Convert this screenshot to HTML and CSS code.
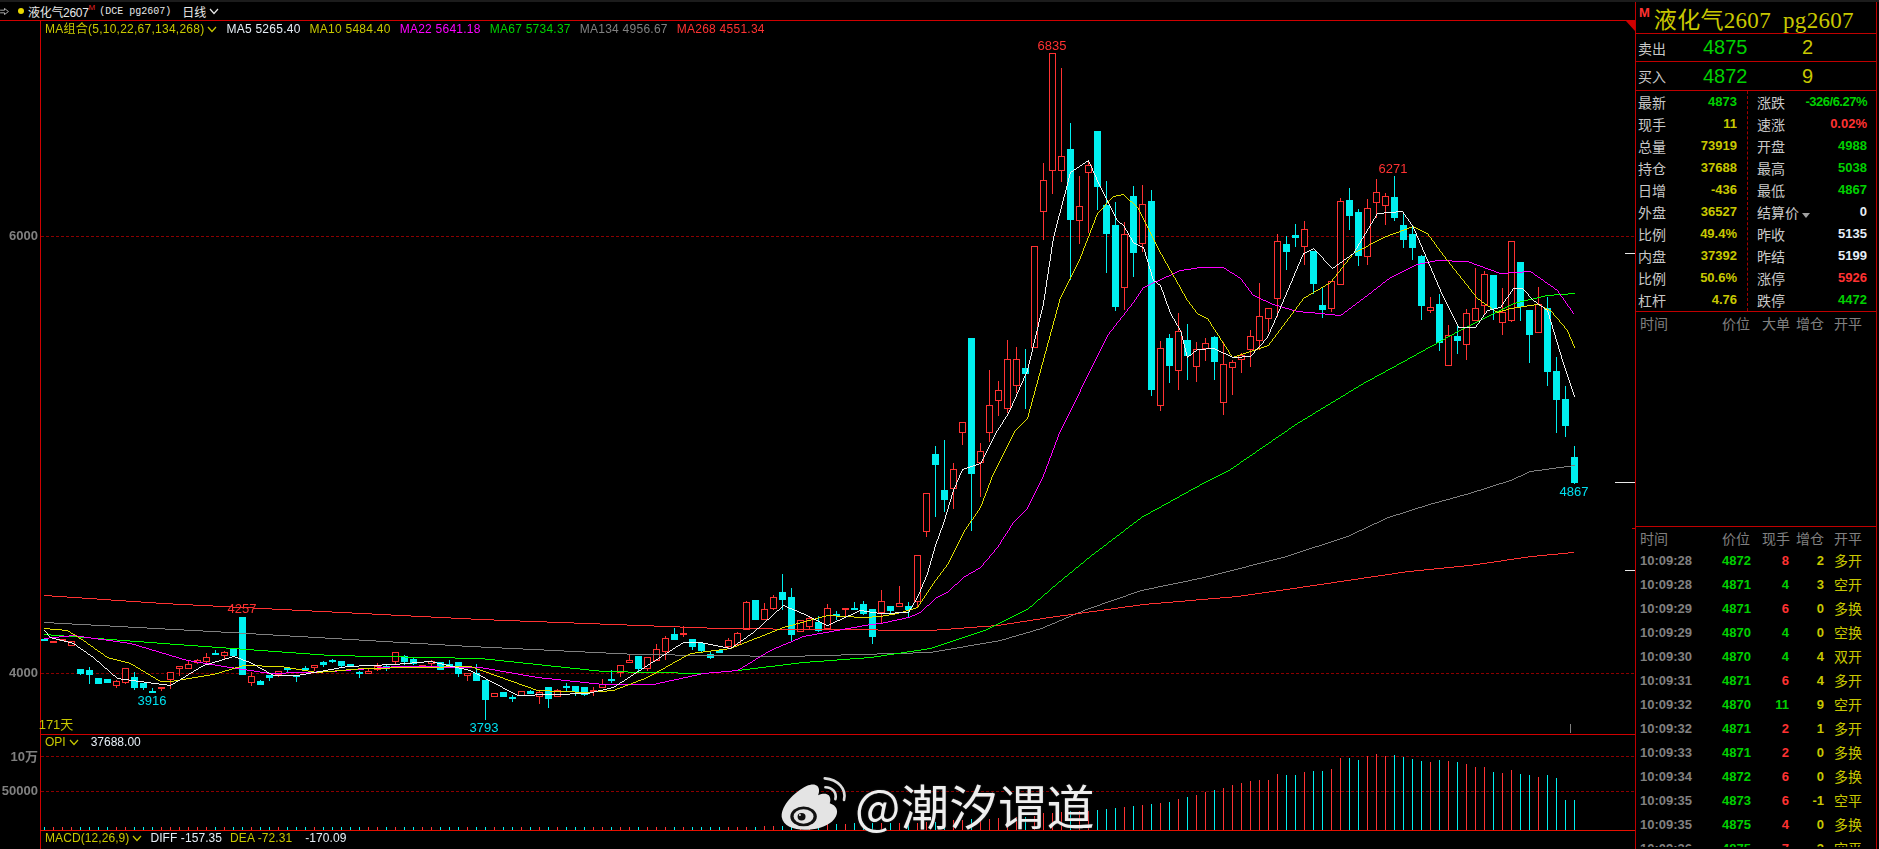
FILE: index.html
```html
<!DOCTYPE html>
<html lang="zh-CN">

<head>
    <meta charset="UTF-8">
    <title>液化气2607 日线</title>
    <link rel="stylesheet" href="styles.css">
</head>

<body>

    <div id="app">
        <!-- left: kline chart -->
        <div id="chart-area">
            <div id="title-bar">
                <svg class="back-icon" viewBox="0 0 10 8"><path d="M0 2.5H5V0.5L9.5 4L5 7.5V5.5H0"/></svg>
                <span class="title-dot"></span>
                <span class="title-name">液化气2607</span>
                <span class="title-m">M</span>
                <span class="title-code">(DCE pg2607)</span>
                <span class="title-period">日线</span>
                <svg class="chev chev-white" viewBox="0 0 10 7"><polyline points="1,1 5,5.5 9,1"/></svg>
            </div>

            <div id="plot">
                <canvas id="kline" width="1635" height="828"></canvas>

                <div class="legend legend-ma">
                    <span class="c-yellow">MA组合(5,10,22,67,134,268)<svg class="chev" viewBox="0 0 10 7"><polyline points="1,1 5,5.5 9,1"/></svg></span>
                    <span class="c-white">MA5 5265.40</span>
                    <span class="c-yellow">MA10 5484.40</span>
                    <span class="c-pink">MA22 5641.18</span>
                    <span class="c-green">MA67 5734.37</span>
                    <span class="c-gray">MA134 4956.67</span>
                    <span class="c-red">MA268 4551.34</span>
                </div>

                <div class="legend legend-opi">
                    <span class="c-yellow">OPI<svg class="chev" viewBox="0 0 10 7"><polyline points="1,1 5,5.5 9,1"/></svg></span>
                    <span class="c-white">37688.00</span>
                </div>

                <div class="legend legend-macd">
                    <span class="c-yellow">MACD(12,26,9)<svg class="chev" viewBox="0 0 10 7"><polyline points="1,1 5,5.5 9,1"/></svg></span>
                    <span class="c-white">DIFF -157.35</span>
                    <span class="c-yellow">DEA -72.31</span>
                    <span class="c-white macd-last">-170.09</span>
                </div>

                <!-- watermark -->
                <div id="watermark">
                    <svg class="weibo" viewBox="15 25 205 172">
                        <path class="weibo-body" d="M20 152C18 118 55 78 95 58C122 46 140 58 130 86C158 74 172 88 165 110C190 118 196 142 172 165C135 198 28 204 20 152Z"/>
                        <ellipse class="weibo-dark" cx="86" cy="150" rx="40" ry="30"/>
                        <ellipse class="weibo-body" cx="86" cy="150" rx="30" ry="22"/>
                        <ellipse class="weibo-dark" cx="80" cy="151" rx="12" ry="11"/>
                        <circle class="weibo-body" cx="75" cy="146" r="3"/>
                        <path class="weibo-wave" d="M150 35C190 38 216 68 208 100"/>
                        <path class="weibo-wave" d="M152 62C172 62 187 78 182 98"/>
                    </svg>
                    <span class="watermark-text">@潮汐谓道</span>
                </div>
            </div>
        </div>

        <!-- right: quote panel -->
        <div id="side">
            <div class="quote-head">
                <span class="quote-m">M</span>
                <span class="quote-name">液化气2607&nbsp;&nbsp;pg2607</span>
            </div>

            <div class="book-row book-ask">
                <span class="book-label">卖出</span>
                <span class="book-price">4875</span>
                <span class="book-size">2</span>
            </div>
            <div class="book-row book-bid">
                <span class="book-label">买入</span>
                <span class="book-price">4872</span>
                <span class="book-size">9</span>
            </div>

            <div class="stats">
                <div class="stats-col stats-left">
                    <div class="stat"><span>最新</span><b class="c-green">4873</b></div>
                    <div class="stat"><span>现手</span><b class="c-yellow">11</b></div>
                    <div class="stat"><span>总量</span><b class="c-yellow">73919</b></div>
                    <div class="stat"><span>持仓</span><b class="c-yellow">37688</b></div>
                    <div class="stat"><span>日增</span><b class="c-yellow">-436</b></div>
                    <div class="stat"><span>外盘</span><b class="c-yellow">36527</b></div>
                    <div class="stat"><span>比例</span><b class="c-yellow">49.4%</b></div>
                    <div class="stat"><span>内盘</span><b class="c-yellow">37392</b></div>
                    <div class="stat"><span>比例</span><b class="c-yellow">50.6%</b></div>
                    <div class="stat"><span>杠杆</span><b class="c-yellow">4.76</b></div>
                </div>
                <div class="stats-col stats-right">
                    <div class="stat"><span>涨跌</span><b class="c-green stat-narrow">-326/6.27%</b></div>
                    <div class="stat"><span>速涨</span><b class="c-red">0.02%</b></div>
                    <div class="stat"><span>开盘</span><b class="c-green">4988</b></div>
                    <div class="stat"><span>最高</span><b class="c-green">5038</b></div>
                    <div class="stat"><span>最低</span><b class="c-green">4867</b></div>
                    <div class="stat"><span>结算价<i class="caret"></i></span><b class="c-white">0</b></div>
                    <div class="stat"><span>昨收</span><b class="c-white">5135</b></div>
                    <div class="stat"><span>昨结</span><b class="c-white">5199</b></div>
                    <div class="stat"><span>涨停</span><b class="c-red">5926</b></div>
                    <div class="stat"><span>跌停</span><b class="c-green">4472</b></div>
                </div>
            </div>

            <div class="big-orders">
                <div class="tick-head">
                    <span>时间</span><span>价位</span><span class="num">大单</span><span class="num">增仓</span><span class="kp">开平</span>
                </div>
            </div>

            <div class="ticks">
                <div class="tick-head">
                    <span>时间</span><span>价位</span><span class="num">现手</span><span class="num">增仓</span><span class="kp">开平</span>
                </div>
                <div class="tick"><b class="c-gray">10:09:28</b><b class="c-green">4872</b><b class="num c-red">8</b><b class="num c-yellow">2</b><span class="kp c-yellow">多开</span></div>
                <div class="tick"><b class="c-gray">10:09:28</b><b class="c-green">4871</b><b class="num c-green">4</b><b class="num c-yellow">3</b><span class="kp c-yellow">空开</span></div>
                <div class="tick"><b class="c-gray">10:09:29</b><b class="c-green">4871</b><b class="num c-red">6</b><b class="num c-yellow">0</b><span class="kp c-yellow">多换</span></div>
                <div class="tick"><b class="c-gray">10:09:29</b><b class="c-green">4870</b><b class="num c-green">4</b><b class="num c-yellow">0</b><span class="kp c-yellow">空换</span></div>
                <div class="tick"><b class="c-gray">10:09:30</b><b class="c-green">4870</b><b class="num c-green">4</b><b class="num c-yellow">4</b><span class="kp c-yellow">双开</span></div>
                <div class="tick"><b class="c-gray">10:09:31</b><b class="c-green">4871</b><b class="num c-red">6</b><b class="num c-yellow">4</b><span class="kp c-yellow">多开</span></div>
                <div class="tick"><b class="c-gray">10:09:32</b><b class="c-green">4870</b><b class="num c-green">11</b><b class="num c-yellow">9</b><span class="kp c-yellow">空开</span></div>
                <div class="tick"><b class="c-gray">10:09:32</b><b class="c-green">4871</b><b class="num c-red">2</b><b class="num c-yellow">1</b><span class="kp c-yellow">多开</span></div>
                <div class="tick"><b class="c-gray">10:09:33</b><b class="c-green">4871</b><b class="num c-red">2</b><b class="num c-yellow">0</b><span class="kp c-yellow">多换</span></div>
                <div class="tick"><b class="c-gray">10:09:34</b><b class="c-green">4872</b><b class="num c-red">6</b><b class="num c-yellow">0</b><span class="kp c-yellow">多换</span></div>
                <div class="tick"><b class="c-gray">10:09:35</b><b class="c-green">4873</b><b class="num c-red">6</b><b class="num c-yellow">-1</b><span class="kp c-yellow">空平</span></div>
                <div class="tick"><b class="c-gray">10:09:35</b><b class="c-green">4875</b><b class="num c-red">4</b><b class="num c-yellow">0</b><span class="kp c-yellow">多换</span></div>
                <div class="tick"><b class="c-gray">10:09:36</b><b class="c-green">4875</b><b class="num c-red">7</b><b class="num c-yellow">3</b><span class="kp c-yellow">空平</span></div>
            </div>
        </div>
    </div>

    <script src="chart.js"></script>

</body>

</html>
```

FILE: styles.css
```css
/* page */
html,
body {
    margin: 0;
    padding: 0;
    height: 100%;
    background-color: #000;
    overflow: hidden;
    font-family: "Liberation Sans", "Noto Sans CJK SC", sans-serif;
}

#app {
    display: flex;
    height: 849px;
    box-sizing: border-box;
    border-top: 2px solid #1c1c1c;
}

/* colors */
.c-yellow { color: #c8c800; }
.c-white { color: #e6eef6; }
.c-pink { color: #ff00ff; }
.c-green { color: #00d000; }
.c-gray { color: #808080; }
.c-red { color: #ff3232; }
.c-cyan { color: #00e0f0; }

/* left */
#chart-area {
    width: 1635px;
    flex: none;
    display: flex;
    flex-direction: column;
}

#title-bar {
    height: 18px;
    flex: none;
    display: flex;
    align-items: center;
    border-bottom: 1px solid #d00000;
    color: #e8e8e8;
    font-size: 12px;
}

.back-icon {
    width: 9px;
    height: 7px;
    fill: none;
    stroke: #c0c0c0;
}

.title-dot {
    width: 6px;
    height: 6px;
    margin-left: 9px;
    border-radius: 50%;
    background-color: #e8d800;
}

.title-name {
    margin-left: 4px;
    font-size: 12px;
    letter-spacing: -0.3px;
}

.title-m {
    color: #e02020;
    font-size: 8px;
    align-self: flex-start;
    margin-top: 1px;
}

.title-code {
    margin-left: 4px;
    font-family: "Liberation Mono", monospace;
    font-size: 10px;
}

.title-period {
    margin-left: 11px;
}

.chev {
    width: 10px;
    height: 7px;
    margin-left: 3px;
    fill: none;
    stroke: #c8c800;
    stroke-width: 1.2;
}

.chev-white {
    stroke: #e8e8e8;
}

#plot {
    position: relative;
    flex: 1;
    overflow: hidden;
}

#kline {
    display: block;
}

/* texts over the chart */
.legend {
    position: absolute;
    left: 45px;
    display: flex;
    gap: 9px;
    font-size: 12px;
    line-height: 14px;
    white-space: nowrap;
}

.legend svg {
    vertical-align: 0;
}

.legend-ma { top: 1px; letter-spacing: 0.25px; }
.legend-opi { top: 714px; gap: 12px; }
.legend-macd { top: 810px; gap: 8px; letter-spacing: 0.08px; }
.macd-last { margin-left: 5px; }

.chart-label {
    position: absolute;
    font-size: 13px;
    line-height: 14px;
    white-space: nowrap;
    transform: translate(-50%, -50%);
}

.axis-label {
    position: absolute;
    font-size: 13px;
    font-weight: bold;
    line-height: 14px;
    white-space: nowrap;
    color: #808080;
    transform: translate(-100%, -50%);
}

#watermark {
    position: absolute;
    left: 780px;
    top: 754px;
    display: flex;
    align-items: center;
    gap: 7px;
}

.weibo {
    width: 68px;
    height: 57px;
}

.weibo-body { fill: #e4e4e4; }
.weibo-dark { fill: #111; }

.weibo-wave {
    fill: none;
    stroke: #dcdcdc;
    stroke-width: 8;
    stroke-linecap: round;
}

.watermark-text {
    color: #eeeeee;
    font-family: "Noto Sans CJK SC", sans-serif;
    font-size: 48px;
    letter-spacing: 0.5px;
    line-height: 56px;
    white-space: nowrap;
    text-shadow: 0 0 2px #333;
}

/* right */
#side {
    width: 242px;
    flex: none;
    box-sizing: border-box;
    border-left: 1px solid #c00000;
    border-right: 1px solid #c00000;
    overflow: hidden;
    color: #c8c8c8;
    font-size: 14px;
}

.quote-head {
    height: 31px;
    display: flex;
    align-items: center;
    border-bottom: 1px solid #c00000;
}

.quote-m {
    margin-left: 3px;
    align-self: flex-start;
    margin-top: 3px;
    color: #ff3232;
    font-size: 13px;
    font-weight: bold;
}

.quote-name {
    margin-left: 4px;
    color: #c8c800;
    font-family: "Liberation Serif", "Noto Sans CJK SC", serif;
    font-size: 23px;
    letter-spacing: 0.3px;
    white-space: nowrap;
}

.book-row {
    display: flex;
    align-items: center;
    border-bottom: 1px solid #c00000;
}

.book-ask { height: 27px; }
.book-bid { height: 28px; }

.book-label {
    width: 65px;
    padding-left: 2px;
    font-size: 14px;
}

.book-price {
    width: 99px;
    color: #00d000;
    font-size: 20px;
}

.book-size {
    color: #c8c800;
    font-size: 20px;
}

.stats {
    display: flex;
    border-bottom: 1px solid #c00000;
}

.stats-left {
    width: 112px;
    padding: 0 10px 0 2px;
    box-sizing: border-box;
    border-right: 1px dashed #a00000;
}

.stats-right {
    width: 119px;
    padding-left: 9px;
    box-sizing: border-box;
}

.stat {
    height: 22px;
    padding-bottom: 1px;
    box-sizing: border-box;
    display: flex;
    align-items: center;
    justify-content: space-between;
}

.stat b,
.tick b {
    font-size: 13px;
}

.stat-narrow {
    letter-spacing: -0.5px;
    white-space: nowrap;
}

.caret {
    display: inline-block;
    margin-left: 3px;
    border-left: 4px solid transparent;
    border-right: 4px solid transparent;
    border-top: 5px solid #a0a0a0;
}

.big-orders {
    height: 214px;
    border-bottom: 1px solid #c00000;
}

/* tick table */
.tick-head,
.tick {
    display: grid;
    grid-template-columns: 82px 40px 27px 35px auto;
    align-items: center;
    padding-left: 4px;
}

.tick-head {
    height: 22px;
    color: #808080;
}

.tick {
    height: 24px;
}

.tick-head .num,
.tick .num {
    text-align: right;
    white-space: nowrap;
}

.kp {
    padding-left: 10px;
    white-space: nowrap;
}

.ticks .tick-head {
    height: 21px;
}

.ticks {
    height: 320px;
    overflow: hidden;
}
```

FILE: chart.js
```js
const canvas = document.getElementById('kline');
const ctx = canvas.getContext('2d');
const plot = document.getElementById('plot');

// canvas starts under the title bar, all numbers below are page pixels
const TOP = 21;
ctx.translate(0, -TOP);

const RED = '#ff3232';
const CYAN = '#00f0f0';
const FRAME = '#d00000';

// [up, bodyTop, bodyBottom, high, low]
const candles = [
    [0,639,641,639,641],[1,641,643,641,643],[1,639,641,639,641],[1,641,646,641,646],[0,669,674,669,675],
    [0,670,675,667,684],[0,678,684,678,684],[0,679,683,679,683],[1,681,686,680,688],[1,668,683,668,684],
    [0,677,688,672,690],[0,683,688,683,690],[0,691,693,688,693],[1,687,689,687,691],[1,672,680,672,689],
    [1,666,669,666,676],[1,664,669,660,669],[1,660,663,659,664],[1,657,662,653,663],[0,653,655,650,655],
    [1,652,656,651,660],[0,649,656,648,657],[0,617,675,617,675],[1,676,683,672,686],[0,681,685,680,685],
    [0,675,678,675,681],[1,671,675,671,677],[0,668,670,668,672],[0,675,677,675,682],[0,668,670,666,671],
    [1,665,668,665,671],[0,662,665,661,667],[0,660,662,659,663],[0,661,666,661,667],[0,664,667,664,667],
    [0,672,673,671,678],[1,671,674,669,674],[1,666,670,663,671],[0,666,668,665,671],[1,652,662,652,665],
    [0,656,662,655,665],[0,659,664,658,665],[1,665,668,665,668],[1,661,664,660,668],[0,662,670,662,670],
    [0,664,667,660,667],[0,662,674,662,677],[1,673,676,673,681],[0,673,681,664,681],[0,680,700,680,720],
    [1,693,697,693,697],[0,692,697,692,697],[0,697,698,695,702],[1,691,696,691,696],[0,691,694,690,694],
    [1,692,697,690,704],[0,687,699,687,708],[1,690,697,689,697],[0,686,688,683,691],[0,686,692,686,696],
    [0,687,695,687,696],[1,690,692,687,696],[1,684,688,679,688],[0,679,681,670,683],[1,665,673,665,677],
    [1,660,663,654,663],[0,656,669,656,672],[1,657,669,657,671],[1,649,661,644,661],[1,638,652,636,660],
    [0,634,640,628,640],[1,633,635,626,637],[0,639,647,639,650],[0,643,651,643,652],[0,654,658,652,659],
    [0,650,653,649,653],[1,640,647,638,649],[1,633,645,632,646],[1,602,630,601,630],[0,600,620,600,620],
    [1,609,620,603,620],[1,597,609,595,610],[0,592,600,574,610],[0,597,635,588,641],[1,620,632,620,632],
    [1,618,627,617,629],[0,622,631,616,632],[1,608,629,604,629],[0,614,616,611,620],[1,608,610,608,618],
    [0,608,609,602,609],[0,604,614,601,615],[0,609,637,609,644],[1,601,613,590,623],[0,606,611,606,615],
    [1,603,607,586,607],[0,606,610,602,617],[1,555,602,555,607],[1,493,532,493,537],[0,454,465,446,517],
    [0,490,500,440,512],[1,469,489,463,509],[1,422,433,422,445],[0,338,474,338,531],[1,451,463,443,497],
    [1,405,433,370,442],[1,390,401,381,416],[1,359,409,340,413],[1,359,386,347,393],[0,368,374,349,409],
    [1,246,348,246,348],[1,180,212,163,240],[1,53,171,53,194],[1,156,171,68,182],[0,149,220,123,280],
    [1,206,221,176,244],[1,165,173,160,233],[0,131,187,131,210],[0,205,234,181,273],[0,225,307,202,311],
    [1,234,288,222,310],[0,196,253,186,277],[1,204,244,185,252],[0,201,390,190,396],[1,348,406,341,411],
    [0,338,366,334,383],[1,331,371,313,390],[0,340,356,324,380],[1,349,367,342,382],[1,343,349,338,361],
    [0,337,362,336,380],[1,364,403,342,415],[1,362,368,360,395],[1,355,360,353,373],[1,336,350,330,367],
    [1,316,341,283,350],[1,308,319,308,332],[1,241,299,234,317],[0,244,252,236,270],[0,235,238,224,247],
    [1,229,247,221,265],[0,251,284,251,294],[0,305,310,288,318],[1,281,309,281,312],[1,201,285,198,285],
    [0,200,216,188,230],[0,212,256,209,266],[1,208,257,199,265],[1,192,203,179,218],[1,196,206,193,225],
    [0,197,218,176,221],[0,225,240,214,248],[0,234,248,225,260],[0,256,306,255,320],[1,307,311,297,313],
    [0,304,343,294,351],[1,335,366,325,366],[0,336,341,326,354],[1,313,345,309,360],[1,308,321,268,321],
    [1,274,306,271,314],[0,275,309,275,320],[1,312,323,288,335],[1,241,321,241,322],[0,262,307,262,321],
    [0,310,335,310,363],[1,304,333,287,333],[0,308,372,297,386],[0,371,400,357,433],[0,399,426,386,437],
    [0,457,483,446,484]
];

// moving averages, sampled as [x, y]
const lines = [
    ['#808080', [[44,622],[230,632],[470,646],[637,654],[787,656],[930,652],[1000,640],[1041,628],[1086,609],[1141,590],[1204,577],[1286,556],[1347,536],[1388,517],[1429,504],[1469,493],[1510,480],[1530,471],[1574,465]]],
    [RED, [[44,595],[163,603],[480,619],[720,628],[930,630],[997,625],[1049,617],[1143,604],[1237,596],[1286,589],[1347,580],[1408,571],[1469,565],[1531,556],[1573,552]]],
    ['#00ff00', [[44,634],[163,643],[330,655],[480,658],[603,671],[703,673],[737,670],[803,662],[870,657],[930,648],[984,630],[1027,609],[1057,583],[1090,556],[1141,517],[1208,480],[1230,469],[1297,423],[1363,383],[1407,359],[1463,328],[1513,303],[1547,295],[1574,293]]],
    ['#ff00ff', [[44,638],[73,635],[130,643],[187,660],[230,667],[270,673],[330,671],[397,666],[480,667],[537,677],[603,684],[653,684],[703,673],[737,670],[770,650],[803,636],[870,624],[880,623],[908,617],[920,612],[935,598],[948,591],[963,577],[980,567],[997,547],[1013,522],[1027,508],[1043,475],[1060,430],[1080,390],[1107,335],[1133,302],[1143,287],[1180,270],[1200,267],[1223,267],[1240,278],[1253,295],[1273,304],[1297,311],[1320,313],[1340,315],[1363,298],[1390,277],[1417,264],[1437,260],[1467,261],[1500,273],[1530,271],[1557,290],[1573,313]]],
    ['#e0e000', [[44,628],[67,630],[83,640],[107,657],[130,663],[160,681],[170,681],[213,674],[243,665],[280,666],[317,672],[363,668],[470,666],[537,690],[587,692],[613,690],[647,677],[690,653],[730,648],[783,627],[827,615],[863,617],[880,616],[897,613],[917,607],[935,580],[948,563],[963,532],[980,507],[993,473],[1015,430],[1027,418],[1060,297],[1080,257],[1097,213],[1113,196],[1123,194],[1137,207],[1157,247],[1187,300],[1197,313],[1207,318],[1232,357],[1268,345],[1303,298],[1330,282],[1353,253],[1383,237],[1413,226],[1427,233],[1443,255],[1477,298],[1497,312],[1510,308],[1537,304],[1550,310],[1567,330],[1574,347]]],
    ['#f0f0f0', [[44,630],[50,637],[73,643],[93,657],[117,678],[147,682],[170,685],[203,665],[233,656],[250,662],[273,675],[297,675],[347,666],[393,664],[430,661],[470,670],[517,695],[587,693],[613,687],[647,665],[683,642],[700,642],[730,648],[753,632],[783,605],[807,615],[827,625],[860,610],[880,613],[908,612],[917,597],[927,573],[935,545],[943,523],[953,490],[962,469],[980,463],[997,430],[1008,413],[1027,370],[1043,303],[1053,237],[1070,172],[1088,160],[1100,187],[1117,220],[1123,225],[1133,242],[1143,247],[1153,280],[1160,285],[1170,313],[1180,330],[1187,357],[1197,349],[1213,348],[1233,357],[1250,356],[1267,337],[1280,307],[1303,253],[1313,248],[1332,268],[1353,253],[1377,213],[1402,211],[1413,227],[1440,290],[1458,327],[1475,327],[1487,310],[1500,307],[1513,288],[1522,288],[1533,300],[1547,310],[1563,363],[1574,396]]]
];

// open interest bars: y of the bar top, from index 80 on
const opiTops = [
    826,826,826,826,826,825,825,824,824,824,823,823,823,823,823,823,823,823,822,822,
    820,820,820,819,819,819,818,818,817,817,816,813,813,812,811,811,811,
    810,809,808,807,806,805,804,803,802,799,797,795,792,790,788,785,783,781,780,780,
    774,775,775,772,771,771,769,758,758,760,756,754,756,755,757,759,761,762,760,761,
    762,764,767,767,772,773,770,774,775,777,775,778,800,800
];

const labels = [
    ['6835', 1052, 46, 'c-red'],
    ['6271', 1393, 169, 'c-red'],
    ['4257', 242, 609, 'c-red'],
    ['4867', 1574, 492, 'c-cyan'],
    ['3916', 152, 701, 'c-cyan'],
    ['3793', 484, 728, 'c-cyan'],
    ['171天', 56, 725, 'c-yellow']
];
const axisLabels = [['6000', 236], ['4000', 673], ['10万', 757], ['50000', 791]];

function candleX(i) {
    return 44 + 9 * i;
}

function hLine(y, x0, x1, color) {
    ctx.fillStyle = color;
    ctx.fillRect(x0, y, x1 - x0, 1);
}

function dashLine(y) {
    ctx.fillStyle = '#8c0000';
    for (let x = 41; x < 1635; x += 5) {
        ctx.fillRect(x, y, 3, 1);
    }
}

// no antialias, the terminal draws stair-stepped lines
function plotLine(points, color) {
    ctx.fillStyle = color;
    for (let s = 1; s < points.length; s++) {
        const [x0, y0] = points[s - 1];
        const [x1, y1] = points[s];
        const steps = Math.max(Math.abs(x1 - x0), Math.abs(y1 - y0));
        for (let k = 0; k <= steps; k++) {
            ctx.fillRect(Math.round(x0 + (x1 - x0) * k / steps), Math.round(y0 + (y1 - y0) * k / steps), 1, 1);
        }
    }
}

function drawCandle(c, i) {
    const x = candleX(i);
    const h = Math.max(c[2] - c[1], 2);
    ctx.fillStyle = c[0] ? RED : CYAN;
    ctx.fillRect(x, c[3], 1, c[4] - c[3]);
    ctx.fillRect(x - 3, c[1], 7, h);
    if (c[0] && h > 2) {
        ctx.fillStyle = '#000';
        ctx.fillRect(x - 2, c[1] + 1, 5, h - 2);
    }
}

function drawBars() {
    candles.forEach(function (c, i) {
        const top = i < 80 ? 827 : opiTops[i - 80];
        ctx.fillStyle = c[0] ? RED : CYAN;
        ctx.fillRect(candleX(i), top, 1, 830 - top);
    });
}

function addLabel(text, x, y, cls) {
    const el = document.createElement('span');
    el.className = cls;
    el.textContent = text;
    el.style.left = x + 'px';
    el.style.top = (y - TOP) + 'px';
    plot.appendChild(el);
}

// grid + frame
dashLine(236);
dashLine(673);
dashLine(756);
dashLine(791);

ctx.fillStyle = FRAME;
ctx.fillRect(40, TOP, 1, 829);
hLine(734, 40, 1635, FRAME);

candles.forEach(drawCandle);
lines.forEach(function (l) {
    plotLine(l[1], l[0]);
});

drawBars();
hLine(830, 40, 1635, '#e81000');

// small marks on the right edge
hLine(253, 1625, 1635, '#e8e8e8');
hLine(482, 1615, 1635, '#e8e8e8');
hLine(570, 1625, 1635, '#e8e8e8');
hLine(528, 1632, 1635, FRAME);
ctx.fillStyle = '#808080';
ctx.fillRect(1570, 724, 1, 9);

// corner triangle
ctx.fillStyle = '#d00000';
ctx.beginPath();
ctx.moveTo(1626, TOP);
ctx.lineTo(1635, TOP);
ctx.lineTo(1635, TOP + 10);
ctx.closePath();
ctx.fill();

labels.forEach(function (l) {
    addLabel(l[0], l[1], l[2], 'chart-label ' + l[3]);
});
axisLabels.forEach(function (l) {
    addLabel(l[0], 38, l[1], 'axis-label');
});
```
